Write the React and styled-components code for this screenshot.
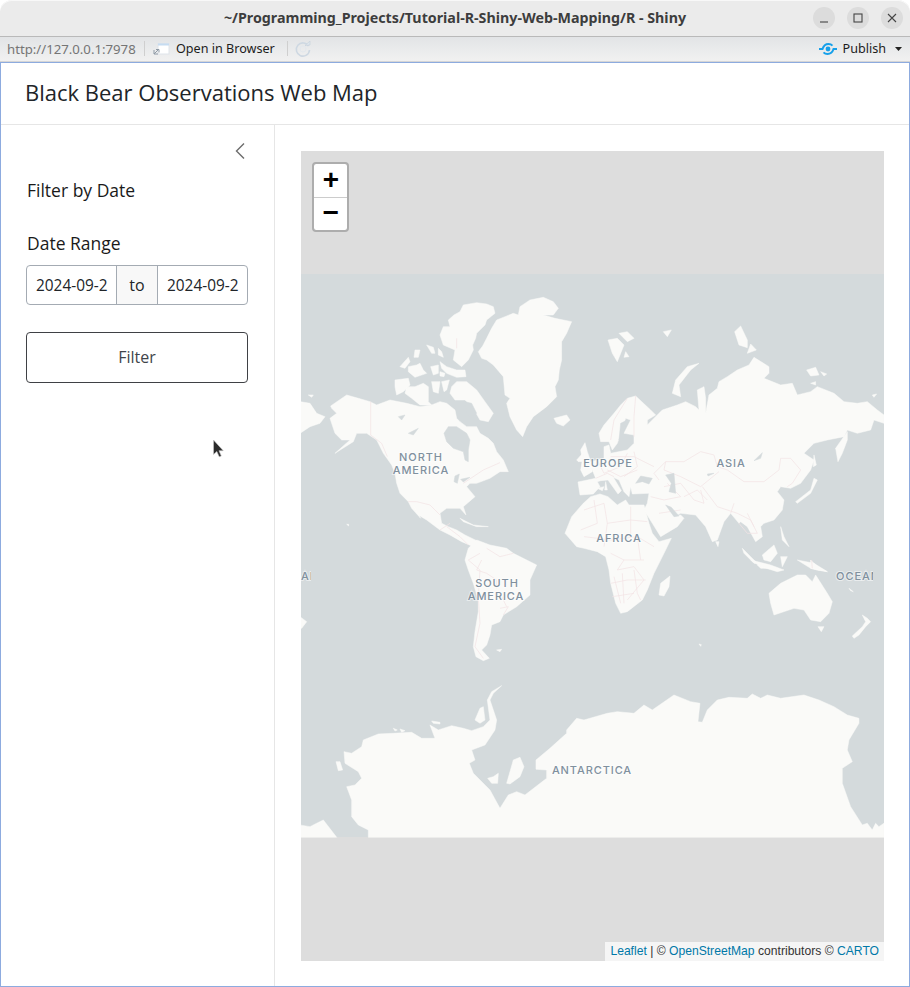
import React from "react";
import styled, { createGlobalStyle } from "styled-components";

const Global = createGlobalStyle`
  html, body { margin: 0; padding: 0; background: #fff; }
  * { box-sizing: border-box; }
`;

const Frame = styled.div`
  width: 910px; height: 987px; display: flex; flex-direction: column;
  background: #fff; overflow: hidden;
`;
const TitleBar = styled.div`
  height: 37px; flex: none; display: flex; align-items: center; justify-content: center;
  position: relative; background: #ebebeb; border-bottom: 1px solid #b9b9b9;
  border-radius: 12px 12px 0 0; box-shadow: inset 0 1px 0 #f8f8f8;
  font: 700 14.25px "Noto Sans", sans-serif; color: #3d3d3d; padding-bottom: 2px;
`;
const WinButtons = styled.div`
  position: absolute; right: 7px; top: 7px; display: flex; gap: 12px;
`;
const WinButton = styled.div`
  width: 22px; height: 22px; border-radius: 50%; background: #dcdcdc;
  display: flex; align-items: center; justify-content: center;
`;
const Toolbar = styled.div`
  height: 25px; flex: none; display: flex; align-items: center; padding: 0 0 1px 7px;
  background: linear-gradient(#e2e4e6, #f1f1f1); border-bottom: 1px solid #d6d6d6;
  font: 400 12.6px "Noto Sans", sans-serif; color: #1c1c1c;
`;
const UrlText = styled.span`color: #757575; font-size: 13.2px; width: 129px; white-space: nowrap;`;
const Sep = styled.span`width: 1px; height: 15px; background: #cfcfcf; margin-left: ${p => p.$ml}px;`;
const ToolLabel = styled.span`margin-left: 5px; white-space: nowrap; width: 100px;`;
const PublishGroup = styled.div`
  margin-left: auto; display: flex; align-items: center; padding-right: 8px;
`;
const PublishLabel = styled.span`margin-left: 5px; margin-right: 9px;`;
const Shell = styled.div`
  flex: 1; min-height: 0; display: flex; flex-direction: column; background: #fff;
  border: 1px solid #8dabdf; font-family: "Open Sans", sans-serif;
`;
const Header = styled.header`
  height: 62px; flex: none; display: flex; align-items: center; padding: 0 0 4px 24px;
  border-bottom: 1px solid #e6e6e6; font-size: 22px; color: #212529;
`;
const Body = styled.div`flex: 1; min-height: 0; display: flex;`;
const Sidebar = styled.aside`
  width: 274px; flex: none; border-right: 1px solid #e6e6e6; padding: 0 26px 0 25px;
  position: relative; color: #1a1a1a;
`;
const Collapse = styled.div`display: flex; justify-content: flex-end; padding: 17px 2px 0 0; height: 47px;`;
const Heading = styled.div`font-size: 17.5px; line-height: 24px; margin: 6px 0 0 1px;`;
const Label = styled.div`font-size: 17.5px; line-height: 24px; margin: 29px 0 10px 1px;`;
const DateGroup = styled.div`
  height: 40px; display: flex; border: 1px solid #a4abb3; border-radius: 4px; overflow: hidden;
  font-size: 15.4px; color: #212529;
`;
const DateCell = styled.div`
  flex: 1; min-width: 0; display: flex; align-items: center; padding-left: 9px;
  white-space: nowrap; overflow: hidden;
`;
const DateTo = styled.div`
  width: 42px; flex: none; display: flex; align-items: center; justify-content: center;
  background: #f8f8f8; border-left: 1px solid #a4abb3; border-right: 1px solid #a4abb3; font-size: 16px;
`;
const FilterButton = styled.button`
  display: block; width: 100%; height: 51px; margin-top: 27px; padding: 0 0 2px; background: #fff;
  border: 1px solid #3f4145; border-radius: 4px; font: 400 16px "Open Sans", sans-serif; color: #3f444a;
`;
const Cursor = styled.svg`position: absolute; left: 211px; top: 314px;`;
const Main = styled.main`flex: 1; min-width: 0; padding: 26px 25px 25px 26px;`;
const MapBox = styled.div`position: relative; width: 583px; height: 810px; background: #ddd; overflow: hidden;`;
const MapSvg = styled.svg`display: block;`;
const Zoom = styled.div`
  position: absolute; left: 11px; top: 11px; width: 37px; border: 2px solid #adadad;
  border-radius: 4px; background: #fff; background-clip: padding-box; overflow: hidden;
`;
const ZoomBtn = styled.div`
  height: 33px; display: flex; align-items: center; justify-content: center; padding: 2px 0 0 1px;
  font: 700 28px "Liberation Mono", monospace; color: #000; line-height: 1;
  & + & { border-top: 1px solid #ccc; }
`;
const Attribution = styled.div`
  position: absolute; right: 0; bottom: 0; height: 19px; padding: 0 5px; display: flex; align-items: center;
  background: rgba(255,255,255,.7); font: 12.13px/19px "Liberation Sans", sans-serif; color: #333; white-space: pre;
`;
const Link = styled.span`color: #0078a8;`;

const LAND = "#fafaf8";
const SEA = "#d4dadc";

const Z4 = [
  "445,150 462,135 480,125 490,105 530,98 560,102 580,110 585,130 560,150 555,165 530,190 527,205 518,225 520,240 505,270 485,290 460,270 465,240 430,225 420,195 430,170 450,170",
  "535,245 548,228 560,205 575,175 590,150 615,140 640,130 655,135 660,110 690,90 730,82 760,95 775,115 760,135 730,135 765,145 790,150 815,155 800,190 785,215 785,270 778,300 775,330 765,350 770,380 755,395 740,410 700,440 680,470 668,500 650,480 630,440 620,400 630,385 615,375 610,320 580,285 560,270 545,265",
  "420,275 440,290 470,300 495,300 498,320 470,322 440,310 425,295",
  "285,330 325,325 330,345 310,365 290,375 285,350",
  "300,290 325,262 330,275 315,295",
  "325,290 350,285 360,280 370,300 380,310 345,322 325,305",
  "392,290 415,285 415,310 400,315",
  "420,305 435,310 432,320 420,318",
  "380,225 400,232 405,250 395,250",
  "415,235 425,245 430,262 415,255",
  "345,240 360,240 355,262 342,262",
  "455,350 470,335 500,335 530,360 555,395 580,430 565,455 540,450 520,415 495,390 465,390 450,370",
  "395,335 420,335 415,370 400,365",
  "425,335 448,330 440,360 432,365",
  "320,350 345,350 370,340 385,350 385,395 395,405 360,405 335,385 315,370",
  "92,408 140,375 175,385 210,395 230,405 270,390 320,400 360,410 395,405 420,395 440,400 465,420 470,445 480,455 500,470 530,470 540,490 565,505 580,520 590,545 610,570 625,605 600,605 570,625 530,640 510,640 500,650 525,680 490,710 498,735 480,715 440,715 420,730 425,760 445,770 470,780 495,795 530,812 520,830 485,815 450,795 420,780 380,750 355,735 340,705 362,745 335,715 325,695 300,670 290,640 285,610 275,585 250,550 230,510 200,490 170,490 160,515 105,550 150,510 125,510 105,490 90,445 110,430 95,415",
  "762,445 800,435 810,450 790,468 770,460",
  "0,395 30,400 50,430 75,440 60,460 30,470 0,490",
  "25,375 40,375 35,382",
  "480,745 520,765 565,770 530,770 490,755",
  "140,763 146,763 146,768",
];
const Z4Sea = [
  "432,490 445,470 470,470 500,490 510,510 505,540 505,575 495,570 490,545 460,535 440,515",
  "465,618 478,612 472,640 462,635",
  "482,628 510,622 490,636",
  "295,440 315,435 305,450",
  "325,490 355,475 340,495",
  "495,395 515,400 530,430 510,440 500,425",
];
const Z4Border = [
  "212,395 212,495 245,520 262,560",
  "490,640 550,600 600,578",
  "325,695 350,695 390,705 420,735",
  "440,770 480,800 505,825",
  "470,205 470,235",
  "420,780 450,760",
];
const Z5 = [
  "45,490 60,465 90,430 110,405 130,385 155,378 200,420 215,435 190,450 190,465 225,430 235,420 280,405 305,395 335,410 345,420 340,360 360,350 365,385 365,430 375,375 400,355 405,335 430,320 460,300 495,285 510,262 555,290 555,310 540,325 590,345 625,340 640,375 680,365 700,350 750,370 780,395 820,400 850,395 880,420 900,435 900,460 870,450 860,480 820,490 790,480 780,500 730,510 690,520 660,550 690,570 680,600 650,640 620,655 590,650 580,665 600,690 595,720 570,750 540,760 530,770 535,800 515,815 490,770 470,755 465,760 440,730 420,755 400,810 385,815 365,770 335,735 290,730 270,740 290,735 300,745 280,770 230,800 205,760 180,720 190,700 195,670 145,672 140,650 135,680 120,665 105,630 88,622 112,662 102,672 72,630 50,632 40,635 48,650 28,672 -12,675 -18,636 35,625 25,600 10,595 5,580 40,570 60,565 60,530 75,525 80,550 130,540 150,520 150,495 120,490 140,450 125,445 100,520 85,540 75,515 50,515",
  "-57,790 -37,740 -2,700 20,680 48,672 72,680 100,705 125,690 135,705 180,705 195,760 205,790 225,815 262,805 240,850 210,910 190,960 175,990 130,1025 110,1030 95,1000 80,940 75,900 65,860 40,845 0,835 -22,830",
  "3,518 10,545 20,575 25,605 0,620 -10,600 -5,570 -10,540",
  "-22,570 -4,550 -4,575 -17,575",
  "265,370 275,330 310,290 345,280 320,300 285,345 290,380",
  "72,210 100,205 120,225 100,275 85,250",
  "105,190 130,185 150,205 130,215",
  "125,245 135,260 120,262",
  "238,185 262,180 250,200",
  "452,185 470,168 490,210 490,233 465,225",
  "490,250 500,222 517,240",
  "668,300 695,292 705,315 680,318",
  "710,305 728,312 720,318",
  "680,340 695,335 695,345",
  "865,375 878,372 870,382",
  "755,535 790,485 790,510 775,550 762,575",
  "635,695 680,660 690,625 700,630 680,670 640,700",
  "690,555 697,585 688,590",
  "475,835 500,860 520,880 510,880 480,850",
  "535,855 570,825 580,850 560,875 540,870",
  "520,885 575,895 530,895",
  "590,860 610,860 595,890",
  "590,770 600,800 615,830 595,810",
  "640,870 690,880 730,905 700,900 680,895",
  "395,815 405,815 402,830",
  "65,635 70,660 62,660",
  "60,650 40,655 55,662",
];
const Z5Sea = [
  "155,640 170,618 205,625 195,642 175,635",
  "245,615 270,610 275,670 255,665 262,640",
  "245,705 262,712 285,738 270,740",
  "510,572 535,548 530,565",
  "370,612 390,610 372,618",
  "110,460 130,450 115,495 105,510",
];
const Z5Border = [
  "245,575 300,575 350,545 390,555 400,590 430,600 480,635 540,635 585,600 590,565 620,565 650,600 625,640 610,650",
  "245,575 240,600 290,620 350,650 405,605",
  "355,650 400,710 460,730 500,750 520,790",
  "240,650 290,640 330,690 360,700 350,660",
  "300,680 340,660 370,690",
  "130,385 90,450 80,510",
  "155,378 150,440 150,500",
  "80,560 150,560 210,590",
  "70,600 110,620 160,600",
  "40,570 60,610 110,590 130,550",
  "35,625 70,610 90,620",
  "120,620 160,590 150,545",
  "245,575 210,610 225,630",
  "200,680 240,690 290,680 250,640",
  "225,730 290,720",
  "0,720 60,700 70,760 140,750 190,755",
  "0,800 80,810 160,800 210,830",
  "70,760 60,830",
  "140,710 140,800",
  "30,690 40,760 -10,780",
  "100,900 150,890 180,930 130,990",
  "90,920 110,1000",
  "120,870 180,870",
  "80,850 120,870 100,900",
  "160,800 170,870",
  "465,760 490,790 520,790",
  "490,730 510,770",
  "440,730 450,700",
];
const Z6 = [
  "495,0 505,-35 530,-60 570,-45 620,-35 640,-20 710,15 690,60 690,105 650,140 610,165 600,185 575,195 570,225 560,255 545,270 568,295 550,302 528,290 520,260 525,215 535,155 535,120 520,70 505,30",
  "590,270 605,268 600,275",
  "0,170 20,185 5,205 0,205",
  "205,832 205,810 175,795 155,770 155,720 140,680 165,675 185,655 175,635 135,610 132,575 155,580 185,560 190,540 235,522 280,520 335,517 365,535 405,535 390,495 415,510 455,497 490,505 515,512 550,500 570,480 562,420 575,395 605,377 580,400 570,420 590,480 585,510 555,555 515,570 525,600 508,610 520,640 570,690 600,745 625,705 650,695 675,705 740,655 740,630 708,628 708,600 750,565 800,520 800,510 830,475 852,480 922,460 952,455 1002,460 1032,435 1057,450 1122,405 1172,425 1200,430 1194,485 1207,487 1222,450 1252,420 1287,412 1342,415 1357,402 1382,415 1402,405 1442,415 1512,405 1557,420 1602,440 1642,465 1677,475 1677,490 1647,540 1642,570 1657,605 1627,625 1627,670 1652,740 1687,795 1702,790 1717,810 1727,790 1737,800 1752,790 1752,832",
  "0,795 30,800 50,790 70,780 110,832 0,832",
  "525,480 540,445 550,440 555,480 540,490",
  "395,483 420,487 420,492 400,490",
  "280,505 292,510 285,513",
  "300,507 315,512 305,517",
  "108,605 120,605 128,630 115,632",
  "620,670 640,600 660,592 672,620 660,650 630,672",
  "563,655 580,650 595,640 593,670 575,670",
];
const Z6Border = [
  "545,0 530,30 560,40 590,60 590,85",
  "540,-20 505,0 540,30 535,110 540,190 525,260 550,295",
  "600,145 625,140 610,165",
  "605,110 620,140",
  "560,-35 600,-10 640,-20",
];
const Z7 = [
  "555,100 590,70 640,45 665,45 685,65 695,45 730,100 745,125 735,160 710,185 680,180 660,150 630,145 570,165 560,130",
  "702,200 720,200 712,215",
  "835,165 850,175 860,185 845,200 825,225 810,235 805,228 835,200 845,185",
  "225,105 230,70 258,48 255,80 240,108",
  "345,252 352,254 350,259",
  "500,0 530,20 580,35 600,30 560,15",
  "680,0 700,20 730,35 700,30 680,25",
  "795,85 808,95 800,92",
];
const Z7Border = [
  "80,70 130,60 185,60",
  "115,40 120,130",
  "150,30 160,100 170,120",
  "85,110 150,100",
  "683,0 685,25",
];

const Shapes = ({ tf, land = [], sea = [], border = [] }) => (
  <g transform={tf}>
    {land.map(p => <polygon key={p} points={p} fill={LAND} stroke={LAND} strokeWidth="1.5" strokeLinejoin="round" />)}
    {border.map(p => <polyline key={p} points={p} fill="none" stroke="#f3e4e5" strokeWidth="2.2" strokeLinejoin="round" />)}
    {sea.map(p => <polygon key={p} points={p} fill={SEA} stroke={SEA} strokeWidth="1.5" strokeLinejoin="round" />)}
  </g>
);

const Place = styled.text`
  font: 500 11px Inter, sans-serif; fill: #80909e; letter-spacing: .9px;
  stroke: rgba(255,255,255,.5); stroke-width: 2px; paint-order: stroke; text-anchor: ${p => p.$anchor || "middle"};
`;

const WorldMap = () => (
  <MapSvg width="583" height="810" viewBox="301 151 583 810">
    <defs>
      <clipPath id="tileLeft"><rect x="301" y="560" width="10" height="40" /></clipPath>
      <clipPath id="tileRight"><rect x="820" y="560" width="53" height="40" /></clipPath>
    </defs>
    <rect x="301" y="274" width="583" height="563" fill={SEA} />
    <Shapes tf="translate(300 270) scale(.3333)" land={Z4} sea={Z4Sea} border={Z4Border} />
    <Shapes tf="translate(584 270) scale(.3333)" land={Z5} sea={Z5Sea} border={Z5Border} />
    <Shapes tf="translate(300 560) scale(.3333)" land={Z6} border={Z6Border} />
    <Shapes tf="translate(584 560) scale(.3333)" land={Z7} border={Z7Border} />
    <Place x="421" y="461">NORTH</Place>
    <Place x="421" y="474">AMERICA</Place>
    <Place x="608" y="467">EUROPE</Place>
    <Place x="731" y="467">ASIA</Place>
    <Place x="619" y="542">AFRICA</Place>
    <Place x="497" y="587">SOUTH</Place>
    <Place x="496" y="600">AMERICA</Place>
    <Place x="592" y="774">ANTARCTICA</Place>
    <g clipPath="url(#tileRight)"><Place x="858" y="580">OCEAN</Place></g>
    <g clipPath="url(#tileLeft)"><Place x="301" y="580" $anchor="start">AN</Place></g>
  </MapSvg>
);

export default function App() {
  return (
    <Frame>
      <Global />
      <TitleBar>
        ~/Programming_Projects/Tutorial-R-Shiny-Web-Mapping/R - Shiny
        <WinButtons>
          <WinButton>
            <svg width="12" height="12" viewBox="0 0 12 12"><path d="M2 10h8" stroke="#444" strokeWidth="1.1" /></svg>
          </WinButton>
          <WinButton>
            <svg width="12" height="12" viewBox="0 0 12 12"><rect x="2" y="2" width="8" height="8" fill="none" stroke="#444" strokeWidth="1.1" /></svg>
          </WinButton>
          <WinButton>
            <svg width="12" height="12" viewBox="0 0 12 12"><path d="M2 2l8 8M10 2l-8 8" stroke="#444" strokeWidth="1.1" /></svg>
          </WinButton>
        </WinButtons>
      </TitleBar>
      <Toolbar>
        <UrlText>http://127.0.0.1:7978</UrlText>
        <Sep $ml={8} />
        <svg width="18" height="14" viewBox="0 0 18 14" style={{ marginLeft: 8 }}>
          <rect x="5" y="1.5" width="11" height="10.5" fill="#fff" stroke="#dfe4ea" />
          <rect x="5" y="1.5" width="11" height="2" fill="#c6dcf1" />
          <path d="M1 12l4-4M3 7.5h3v3M1 8v4h4" fill="none" stroke="#8f9aa6" strokeWidth="1" />
        </svg>
        <ToolLabel>Open in Browser</ToolLabel>
        <Sep $ml={11} />
        <svg width="18" height="18" viewBox="0 0 18 18" style={{ marginLeft: 6 }}>
          <path d="M14.5 6A6.6 6.6 0 1 0 15.5 10" fill="none" stroke="#ced8e2" strokeWidth="1.6" />
          <path d="M11 5.5l5-.5V1z" fill="#dfe6ed" stroke="#c5d0da" strokeWidth=".6" />
          <circle cx="9" cy="9" r="3" fill="none" stroke="#e3e8ed" strokeWidth="1" />
        </svg>
        <PublishGroup>
          <svg width="20" height="14" viewBox="0 0 20 14">
            <path d="M1 7h3.5C5.5 3.8 8 2 10.5 2c1.8 0 3 .6 4 1.6" fill="none" stroke="#16a0ea" strokeWidth="2" />
            <path d="M19 7h-3.5c-1 3.2-3.5 5-6 5-1.8 0-3-.6-4-1.6" fill="none" stroke="#16a0ea" strokeWidth="2" />
            <circle cx="10" cy="7" r="2.4" fill="#16a0ea" />
          </svg>
          <PublishLabel>Publish</PublishLabel>
          <svg width="7" height="4" viewBox="0 0 7 4"><path d="M0 0h7L3.5 4z" fill="#222" /></svg>
        </PublishGroup>
      </Toolbar>
      <Shell>
        <Header>Black Bear Observations Web Map</Header>
        <Body>
          <Sidebar>
            <Collapse>
              <svg width="12" height="18" viewBox="0 0 12 18">
                <path d="M10 1.5L2.5 9l7.5 7.5" fill="none" stroke="#6c6c6c" strokeWidth="1.4" />
              </svg>
            </Collapse>
            <Heading>Filter by Date</Heading>
            <Label>Date Range</Label>
            <DateGroup>
              <DateCell>2024-09-2</DateCell>
              <DateTo>to</DateTo>
              <DateCell>2024-09-2</DateCell>
            </DateGroup>
            <FilterButton>Filter</FilterButton>
            <Cursor width="13" height="20" viewBox="0 0 13 20">
              <path d="M1.5 1v14.5l3.3-3 2.4 5.3 2.1-.9-2.3-5.2h4.3z" fill="#2b2b2b" stroke="#c9c9c9" strokeWidth=".6" />
            </Cursor>
          </Sidebar>
          <Main>
            <MapBox>
              <WorldMap />
              <Zoom>
                <ZoomBtn>+</ZoomBtn>
                <ZoomBtn>−</ZoomBtn>
              </Zoom>
              <Attribution>
                <Link>Leaflet</Link> | © <Link>OpenStreetMap</Link> contributors © <Link>CARTO</Link>
              </Attribution>
            </MapBox>
          </Main>
        </Body>
      </Shell>
    </Frame>
  );
}
